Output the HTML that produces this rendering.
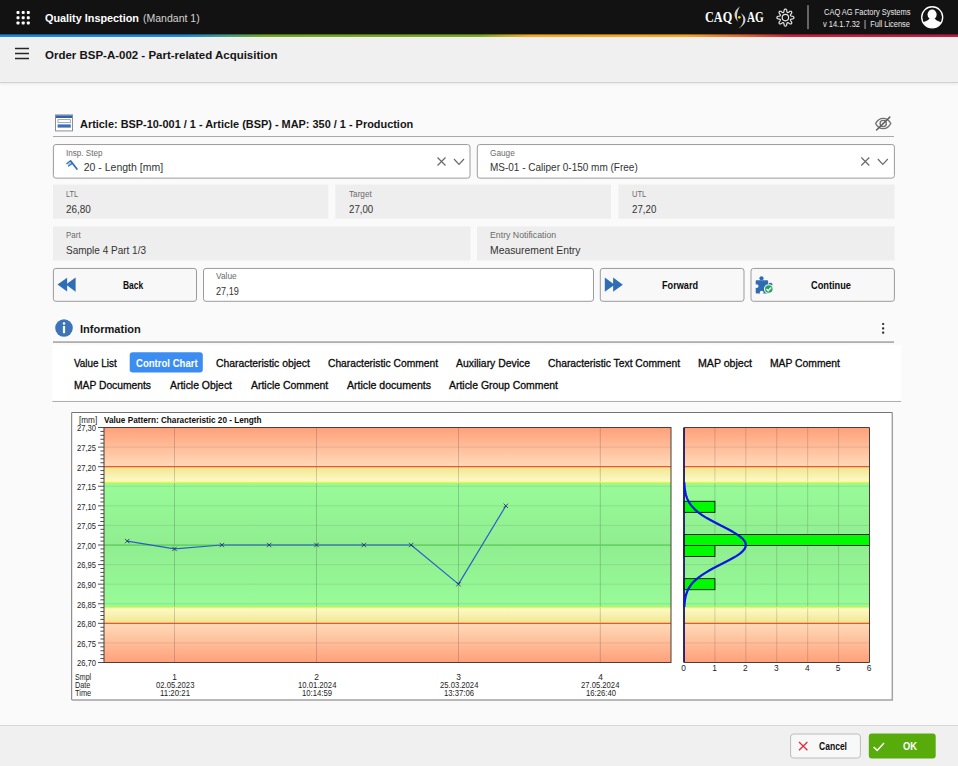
<!DOCTYPE html>
<html><head><meta charset="utf-8"><title>Quality Inspection</title>
<style>
*{box-sizing:border-box;margin:0;padding:0}
html,body{width:958px;height:766px;overflow:hidden}
body{position:relative;background:#fafafa;font-family:"Liberation Sans",sans-serif;}
.a{position:absolute}
.t{position:absolute;white-space:pre;line-height:1;transform-origin:0 50%;font-family:"Liberation Sans",sans-serif}
#topbar{left:0;top:0;width:958px;height:35px;background:#121212}
#header{left:0;top:37px;width:958px;height:46px;background:#f0f0f0;border-bottom:1px solid #d0d0d0;box-shadow:0 1px 3px rgba(0,0,0,.08)}
#footer{left:0;top:725px;width:958px;height:41px;background:#f0f0f0;border-top:1px solid #d6d6d6}
svg{position:absolute;left:0;top:0;overflow:visible}
</style></head>
<body>
<div id="topbar" class="a"></div><div id="header" class="a"></div>
<div id="footer" class="a"></div>
<svg width="958" height="766" viewBox="0 0 958 766">
<defs><linearGradient id="rb" gradientUnits="userSpaceOnUse" x1="0" y1="0" x2="958" y2="0"><stop offset="0.0000" stop-color="#1a85d9"/><stop offset="0.1931" stop-color="#1a85d9"/><stop offset="0.2349" stop-color="#3f9a86"/><stop offset="0.2766" stop-color="#6fa720"/><stop offset="0.4990" stop-color="#73a91e"/><stop offset="0.5271" stop-color="#b9aa21"/><stop offset="0.5532" stop-color="#f6a821"/><stop offset="0.7182" stop-color="#f5a322"/><stop offset="0.7724" stop-color="#e5652d"/><stop offset="0.8246" stop-color="#c8203c"/><stop offset="1.0000" stop-color="#b71a3d"/></linearGradient></defs>
<rect x="0" y="34.4" width="958" height="2.55" fill="url(#rb)"/>
<rect x="53.00" y="136.05" width="841.00" height="0.85" rx="0" fill="#9a9a9a"/>
<rect x="53.40" y="144.55" width="416.60" height="33.60" rx="2.5" fill="#fff" stroke="#9b9b9b" stroke-width="1"/>
<rect x="477.30" y="144.55" width="417.10" height="33.60" rx="2.5" fill="#fff" stroke="#9b9b9b" stroke-width="1"/>
<rect x="53.00" y="184.60" width="275.30" height="34.10" rx="0" fill="#eeeeee"/>
<rect x="335.30" y="184.60" width="275.70" height="34.10" rx="0" fill="#eeeeee"/>
<rect x="618.40" y="184.60" width="276.20" height="34.10" rx="0" fill="#eeeeee"/>
<rect x="53.00" y="226.40" width="417.50" height="34.10" rx="0" fill="#eeeeee"/>
<rect x="477.00" y="226.40" width="417.60" height="34.10" rx="0" fill="#eeeeee"/>
<rect x="53.40" y="268.45" width="143.10" height="32.85" rx="2.5" fill="#f8f8f8" stroke="#9b9b9b" stroke-width="1"/>
<rect x="203.50" y="268.45" width="390.00" height="32.85" rx="2.5" fill="#fff" stroke="#9b9b9b" stroke-width="1"/>
<rect x="600.30" y="268.45" width="143.70" height="32.85" rx="2.5" fill="#f8f8f8" stroke="#9b9b9b" stroke-width="1"/>
<rect x="751.00" y="268.45" width="143.40" height="32.85" rx="2.5" fill="#f8f8f8" stroke="#9b9b9b" stroke-width="1"/>
<rect x="53.00" y="341.30" width="841.00" height="1.60" rx="0" fill="#a6a6a6"/>
<rect x="52.40" y="344.80" width="848.80" height="56.40" rx="0" fill="#ffffff"/>
<rect x="52.40" y="400.95" width="848.80" height="1.00" rx="0" fill="#ababab"/>
<rect x="129.70" y="352.20" width="73.10" height="20.40" rx="3" fill="#3c8df2"/>
<rect x="71.70" y="412.40" width="820.50" height="287.30" rx="0" fill="#ffffff"/>
<path d="M71.7 699.9 V412.5 H892.4" fill="none" stroke="#747474" stroke-width="1"/>
<path d="M892.3 412.5 V699.9 H71.7" fill="none" stroke="#a3a3a3" stroke-width="1.5"/>
<rect x="790.60" y="734.00" width="69.80" height="24.00" rx="3" fill="#f8f8f8" stroke="#bcbcbc" stroke-width="1"/>
<rect x="868.80" y="733.60" width="66.90" height="24.80" rx="3" fill="#57ab0b"/>
<defs>
<linearGradient id="gr1" x1="0" y1="0" x2="0" y2="1"><stop offset="0" stop-color="#ffa07a"/><stop offset="1" stop-color="#ffdab9"/></linearGradient>
<linearGradient id="gr2" x1="0" y1="0" x2="0" y2="1"><stop offset="0" stop-color="#ffdab9"/><stop offset="1" stop-color="#ffa07a"/></linearGradient>
<linearGradient id="gy1" x1="0" y1="0" x2="0" y2="1"><stop offset="0" stop-color="#f0e68c"/><stop offset="1" stop-color="#fffacd"/></linearGradient>
<linearGradient id="gy2" x1="0" y1="0" x2="0" y2="1"><stop offset="0" stop-color="#fffacd"/><stop offset="1" stop-color="#f0e68c"/></linearGradient>
<linearGradient id="gg" x1="0" y1="0" x2="0" y2="1"><stop offset="0" stop-color="#98fb98"/><stop offset="0.5" stop-color="#90ee90"/><stop offset="1" stop-color="#98fb98"/></linearGradient>
</defs>
<rect x="104.00" y="427.50" width="567.00" height="39.17" fill="url(#gr1)"/>
<rect x="104.00" y="466.67" width="567.00" height="15.67" fill="url(#gy1)"/>
<rect x="104.00" y="482.33" width="567.00" height="125.33" fill="url(#gg)"/>
<rect x="104.00" y="607.67" width="567.00" height="15.67" fill="url(#gy2)"/>
<rect x="104.00" y="623.33" width="567.00" height="39.17" fill="url(#gr2)"/>
<line x1="104.00" x2="671.00" y1="447.08" y2="447.08" stroke="rgba(70,60,60,.135)" stroke-width="0.9"/>
<line x1="104.00" x2="671.00" y1="466.67" y2="466.67" stroke="rgba(70,60,60,.135)" stroke-width="0.9"/>
<line x1="104.00" x2="671.00" y1="486.25" y2="486.25" stroke="rgba(70,60,60,.135)" stroke-width="0.9"/>
<line x1="104.00" x2="671.00" y1="505.83" y2="505.83" stroke="rgba(70,60,60,.135)" stroke-width="0.9"/>
<line x1="104.00" x2="671.00" y1="525.42" y2="525.42" stroke="rgba(70,60,60,.135)" stroke-width="0.9"/>
<line x1="104.00" x2="671.00" y1="545.00" y2="545.00" stroke="rgba(70,60,60,.135)" stroke-width="0.9"/>
<line x1="104.00" x2="671.00" y1="564.58" y2="564.58" stroke="rgba(70,60,60,.135)" stroke-width="0.9"/>
<line x1="104.00" x2="671.00" y1="584.17" y2="584.17" stroke="rgba(70,60,60,.135)" stroke-width="0.9"/>
<line x1="104.00" x2="671.00" y1="603.75" y2="603.75" stroke="rgba(70,60,60,.135)" stroke-width="0.9"/>
<line x1="104.00" x2="671.00" y1="623.33" y2="623.33" stroke="rgba(70,60,60,.135)" stroke-width="0.9"/>
<line x1="104.00" x2="671.00" y1="642.92" y2="642.92" stroke="rgba(70,60,60,.135)" stroke-width="0.9"/>
<rect x="684.00" y="427.50" width="185.50" height="39.17" fill="url(#gr1)"/>
<rect x="684.00" y="466.67" width="185.50" height="15.67" fill="url(#gy1)"/>
<rect x="684.00" y="482.33" width="185.50" height="125.33" fill="url(#gg)"/>
<rect x="684.00" y="607.67" width="185.50" height="15.67" fill="url(#gy2)"/>
<rect x="684.00" y="623.33" width="185.50" height="39.17" fill="url(#gr2)"/>
<line x1="684.00" x2="869.50" y1="447.08" y2="447.08" stroke="rgba(70,60,60,.135)" stroke-width="0.9"/>
<line x1="684.00" x2="869.50" y1="466.67" y2="466.67" stroke="rgba(70,60,60,.135)" stroke-width="0.9"/>
<line x1="684.00" x2="869.50" y1="486.25" y2="486.25" stroke="rgba(70,60,60,.135)" stroke-width="0.9"/>
<line x1="684.00" x2="869.50" y1="505.83" y2="505.83" stroke="rgba(70,60,60,.135)" stroke-width="0.9"/>
<line x1="684.00" x2="869.50" y1="525.42" y2="525.42" stroke="rgba(70,60,60,.135)" stroke-width="0.9"/>
<line x1="684.00" x2="869.50" y1="545.00" y2="545.00" stroke="rgba(70,60,60,.135)" stroke-width="0.9"/>
<line x1="684.00" x2="869.50" y1="564.58" y2="564.58" stroke="rgba(70,60,60,.135)" stroke-width="0.9"/>
<line x1="684.00" x2="869.50" y1="584.17" y2="584.17" stroke="rgba(70,60,60,.135)" stroke-width="0.9"/>
<line x1="684.00" x2="869.50" y1="603.75" y2="603.75" stroke="rgba(70,60,60,.135)" stroke-width="0.9"/>
<line x1="684.00" x2="869.50" y1="623.33" y2="623.33" stroke="rgba(70,60,60,.135)" stroke-width="0.9"/>
<line x1="684.00" x2="869.50" y1="642.92" y2="642.92" stroke="rgba(70,60,60,.135)" stroke-width="0.9"/>
<line x1="174.50" x2="174.50" y1="427.50" y2="662.50" stroke="rgba(60,55,55,.25)" stroke-width="0.9"/>
<line x1="316.50" x2="316.50" y1="427.50" y2="662.50" stroke="rgba(60,55,55,.25)" stroke-width="0.9"/>
<line x1="458.50" x2="458.50" y1="427.50" y2="662.50" stroke="rgba(60,55,55,.25)" stroke-width="0.9"/>
<line x1="600.30" x2="600.30" y1="427.50" y2="662.50" stroke="rgba(60,55,55,.25)" stroke-width="0.9"/>
<line x1="714.92" x2="714.92" y1="427.50" y2="662.50" stroke="rgba(60,55,55,.21)" stroke-width="0.9"/>
<line x1="745.83" x2="745.83" y1="427.50" y2="662.50" stroke="rgba(60,55,55,.21)" stroke-width="0.9"/>
<line x1="776.75" x2="776.75" y1="427.50" y2="662.50" stroke="rgba(60,55,55,.21)" stroke-width="0.9"/>
<line x1="807.67" x2="807.67" y1="427.50" y2="662.50" stroke="rgba(60,55,55,.21)" stroke-width="0.9"/>
<line x1="838.58" x2="838.58" y1="427.50" y2="662.50" stroke="rgba(60,55,55,.21)" stroke-width="0.9"/>
<line x1="104.00" x2="671.00" y1="466.67" y2="466.67" stroke="#ec5437" stroke-width="1.3"/>
<line x1="104.00" x2="671.00" y1="623.33" y2="623.33" stroke="#ec5437" stroke-width="1.3"/>
<line x1="104.00" x2="671.00" y1="482.33" y2="482.33" stroke="#f4f42a" stroke-width="1.3"/>
<line x1="104.00" x2="671.00" y1="607.67" y2="607.67" stroke="#f3f14a" stroke-width="1.3"/>
<line x1="684.00" x2="869.50" y1="466.67" y2="466.67" stroke="#ec5437" stroke-width="1.3"/>
<line x1="684.00" x2="869.50" y1="623.33" y2="623.33" stroke="#ec5437" stroke-width="1.3"/>
<line x1="684.00" x2="869.50" y1="482.33" y2="482.33" stroke="#f4f42a" stroke-width="1.3"/>
<line x1="684.00" x2="869.50" y1="607.67" y2="607.67" stroke="#f3f14a" stroke-width="1.3"/>
<line x1="104.00" x2="671.00" y1="545.00" y2="545.00" stroke="#58cf58" stroke-width="1.25"/>
<rect x="684.00" y="501.30" width="30.92" height="11.05" fill="#00fb00" stroke="#101010" stroke-width="0.9"/>
<rect x="684.00" y="534.45" width="185.50" height="11.05" fill="#00fb00" stroke="#101010" stroke-width="0.9"/>
<rect x="684.00" y="545.50" width="30.92" height="11.05" fill="#00fb00" stroke="#101010" stroke-width="0.9"/>
<rect x="684.00" y="578.65" width="30.92" height="11.05" fill="#00fb00" stroke="#101010" stroke-width="0.9"/>
<line x1="684.00" x2="684.00" y1="427.50" y2="662.50" stroke="#14146e" stroke-width="1.8"/>
<path d="M684.28 482.33 L684.37 483.83 L684.47 485.33 L684.60 486.83 L684.76 488.33 L684.95 489.83 L685.19 491.33 L685.48 492.83 L685.83 494.33 L686.25 495.83 L686.75 497.33 L687.33 498.83 L688.01 500.33 L688.81 501.83 L689.73 503.33 L690.77 504.83 L691.97 506.33 L693.31 507.83 L694.81 509.33 L696.48 510.83 L698.32 512.33 L700.33 513.83 L702.51 515.33 L704.84 516.83 L707.33 518.33 L709.96 519.83 L712.70 521.33 L715.53 522.83 L718.43 524.33 L721.37 525.83 L724.31 527.33 L727.22 528.83 L730.04 530.33 L732.76 531.83 L735.31 533.33 L737.67 534.83 L739.78 536.33 L741.63 537.83 L743.17 539.33 L744.38 540.83 L745.23 542.33 L745.72 543.83 L745.82 545.33 L745.55 546.83 L744.90 548.33 L743.88 549.83 L742.53 551.33 L740.85 552.83 L738.87 554.33 L736.65 555.83 L734.20 557.33 L731.57 558.83 L728.80 560.33 L725.93 561.83 L723.01 563.33 L720.06 564.83 L717.14 566.33 L714.26 567.83 L711.46 569.33 L708.77 570.83 L706.21 572.33 L703.79 573.83 L701.52 575.33 L699.42 576.83 L697.49 578.33 L695.72 579.83 L694.13 581.33 L692.69 582.83 L691.42 584.33 L690.29 585.83 L689.30 587.33 L688.44 588.83 L687.70 590.33 L687.06 591.83 L686.52 593.33 L686.06 594.83 L685.67 596.33 L685.35 597.83 L685.08 599.33 L684.86 600.83 L684.68 602.33 L684.54 603.83 L684.42 605.33 L684.33 606.83" fill="none" stroke="#0a14e6" stroke-width="2.2" stroke-linejoin="round"/>
<rect x="104.00" y="427.50" width="567.00" height="235.00" fill="none" stroke="#4a3f38" stroke-width="1"/>
<path d="M684.00 427.50 H869.50 V662.50 H684.00" fill="none" stroke="#4a3f38" stroke-width="1"/>
<line x1="98.00" x2="104.00" y1="427.50" y2="427.50" stroke="#3a3a3a" stroke-width="0.9"/>
<line x1="100.40" x2="104.00" y1="431.42" y2="431.42" stroke="#3a3a3a" stroke-width="0.9"/>
<line x1="100.40" x2="104.00" y1="435.33" y2="435.33" stroke="#3a3a3a" stroke-width="0.9"/>
<line x1="100.40" x2="104.00" y1="439.25" y2="439.25" stroke="#3a3a3a" stroke-width="0.9"/>
<line x1="100.40" x2="104.00" y1="443.17" y2="443.17" stroke="#3a3a3a" stroke-width="0.9"/>
<line x1="98.00" x2="104.00" y1="447.08" y2="447.08" stroke="#3a3a3a" stroke-width="0.9"/>
<line x1="100.40" x2="104.00" y1="451.00" y2="451.00" stroke="#3a3a3a" stroke-width="0.9"/>
<line x1="100.40" x2="104.00" y1="454.92" y2="454.92" stroke="#3a3a3a" stroke-width="0.9"/>
<line x1="100.40" x2="104.00" y1="458.83" y2="458.83" stroke="#3a3a3a" stroke-width="0.9"/>
<line x1="100.40" x2="104.00" y1="462.75" y2="462.75" stroke="#3a3a3a" stroke-width="0.9"/>
<line x1="98.00" x2="104.00" y1="466.67" y2="466.67" stroke="#3a3a3a" stroke-width="0.9"/>
<line x1="100.40" x2="104.00" y1="470.58" y2="470.58" stroke="#3a3a3a" stroke-width="0.9"/>
<line x1="100.40" x2="104.00" y1="474.50" y2="474.50" stroke="#3a3a3a" stroke-width="0.9"/>
<line x1="100.40" x2="104.00" y1="478.42" y2="478.42" stroke="#3a3a3a" stroke-width="0.9"/>
<line x1="100.40" x2="104.00" y1="482.33" y2="482.33" stroke="#3a3a3a" stroke-width="0.9"/>
<line x1="98.00" x2="104.00" y1="486.25" y2="486.25" stroke="#3a3a3a" stroke-width="0.9"/>
<line x1="100.40" x2="104.00" y1="490.17" y2="490.17" stroke="#3a3a3a" stroke-width="0.9"/>
<line x1="100.40" x2="104.00" y1="494.08" y2="494.08" stroke="#3a3a3a" stroke-width="0.9"/>
<line x1="100.40" x2="104.00" y1="498.00" y2="498.00" stroke="#3a3a3a" stroke-width="0.9"/>
<line x1="100.40" x2="104.00" y1="501.92" y2="501.92" stroke="#3a3a3a" stroke-width="0.9"/>
<line x1="98.00" x2="104.00" y1="505.83" y2="505.83" stroke="#3a3a3a" stroke-width="0.9"/>
<line x1="100.40" x2="104.00" y1="509.75" y2="509.75" stroke="#3a3a3a" stroke-width="0.9"/>
<line x1="100.40" x2="104.00" y1="513.67" y2="513.67" stroke="#3a3a3a" stroke-width="0.9"/>
<line x1="100.40" x2="104.00" y1="517.58" y2="517.58" stroke="#3a3a3a" stroke-width="0.9"/>
<line x1="100.40" x2="104.00" y1="521.50" y2="521.50" stroke="#3a3a3a" stroke-width="0.9"/>
<line x1="98.00" x2="104.00" y1="525.42" y2="525.42" stroke="#3a3a3a" stroke-width="0.9"/>
<line x1="100.40" x2="104.00" y1="529.33" y2="529.33" stroke="#3a3a3a" stroke-width="0.9"/>
<line x1="100.40" x2="104.00" y1="533.25" y2="533.25" stroke="#3a3a3a" stroke-width="0.9"/>
<line x1="100.40" x2="104.00" y1="537.17" y2="537.17" stroke="#3a3a3a" stroke-width="0.9"/>
<line x1="100.40" x2="104.00" y1="541.08" y2="541.08" stroke="#3a3a3a" stroke-width="0.9"/>
<line x1="98.00" x2="104.00" y1="545.00" y2="545.00" stroke="#3a3a3a" stroke-width="0.9"/>
<line x1="100.40" x2="104.00" y1="548.92" y2="548.92" stroke="#3a3a3a" stroke-width="0.9"/>
<line x1="100.40" x2="104.00" y1="552.83" y2="552.83" stroke="#3a3a3a" stroke-width="0.9"/>
<line x1="100.40" x2="104.00" y1="556.75" y2="556.75" stroke="#3a3a3a" stroke-width="0.9"/>
<line x1="100.40" x2="104.00" y1="560.67" y2="560.67" stroke="#3a3a3a" stroke-width="0.9"/>
<line x1="98.00" x2="104.00" y1="564.58" y2="564.58" stroke="#3a3a3a" stroke-width="0.9"/>
<line x1="100.40" x2="104.00" y1="568.50" y2="568.50" stroke="#3a3a3a" stroke-width="0.9"/>
<line x1="100.40" x2="104.00" y1="572.42" y2="572.42" stroke="#3a3a3a" stroke-width="0.9"/>
<line x1="100.40" x2="104.00" y1="576.33" y2="576.33" stroke="#3a3a3a" stroke-width="0.9"/>
<line x1="100.40" x2="104.00" y1="580.25" y2="580.25" stroke="#3a3a3a" stroke-width="0.9"/>
<line x1="98.00" x2="104.00" y1="584.17" y2="584.17" stroke="#3a3a3a" stroke-width="0.9"/>
<line x1="100.40" x2="104.00" y1="588.08" y2="588.08" stroke="#3a3a3a" stroke-width="0.9"/>
<line x1="100.40" x2="104.00" y1="592.00" y2="592.00" stroke="#3a3a3a" stroke-width="0.9"/>
<line x1="100.40" x2="104.00" y1="595.92" y2="595.92" stroke="#3a3a3a" stroke-width="0.9"/>
<line x1="100.40" x2="104.00" y1="599.83" y2="599.83" stroke="#3a3a3a" stroke-width="0.9"/>
<line x1="98.00" x2="104.00" y1="603.75" y2="603.75" stroke="#3a3a3a" stroke-width="0.9"/>
<line x1="100.40" x2="104.00" y1="607.67" y2="607.67" stroke="#3a3a3a" stroke-width="0.9"/>
<line x1="100.40" x2="104.00" y1="611.58" y2="611.58" stroke="#3a3a3a" stroke-width="0.9"/>
<line x1="100.40" x2="104.00" y1="615.50" y2="615.50" stroke="#3a3a3a" stroke-width="0.9"/>
<line x1="100.40" x2="104.00" y1="619.42" y2="619.42" stroke="#3a3a3a" stroke-width="0.9"/>
<line x1="98.00" x2="104.00" y1="623.33" y2="623.33" stroke="#3a3a3a" stroke-width="0.9"/>
<line x1="100.40" x2="104.00" y1="627.25" y2="627.25" stroke="#3a3a3a" stroke-width="0.9"/>
<line x1="100.40" x2="104.00" y1="631.17" y2="631.17" stroke="#3a3a3a" stroke-width="0.9"/>
<line x1="100.40" x2="104.00" y1="635.08" y2="635.08" stroke="#3a3a3a" stroke-width="0.9"/>
<line x1="100.40" x2="104.00" y1="639.00" y2="639.00" stroke="#3a3a3a" stroke-width="0.9"/>
<line x1="98.00" x2="104.00" y1="642.92" y2="642.92" stroke="#3a3a3a" stroke-width="0.9"/>
<line x1="100.40" x2="104.00" y1="646.83" y2="646.83" stroke="#3a3a3a" stroke-width="0.9"/>
<line x1="100.40" x2="104.00" y1="650.75" y2="650.75" stroke="#3a3a3a" stroke-width="0.9"/>
<line x1="100.40" x2="104.00" y1="654.67" y2="654.67" stroke="#3a3a3a" stroke-width="0.9"/>
<line x1="100.40" x2="104.00" y1="658.58" y2="658.58" stroke="#3a3a3a" stroke-width="0.9"/>
<line x1="98.00" x2="104.00" y1="662.50" y2="662.50" stroke="#3a3a3a" stroke-width="0.9"/>
<path d="M127.17 541.08 L174.50 548.92 L221.83 545.00 L269.17 545.00 L316.50 545.00 L363.83 545.00 L411.17 545.00 L458.50 584.17 L505.83 505.83" fill="none" stroke="#2a5ccb" stroke-width="1.15" stroke-linejoin="round"/>
<path d="M124.97 538.88 l4.4 4.4 m0 -4.4 l-4.4 4.4" stroke="#1b2560" stroke-width="0.8" fill="none"/>
<path d="M172.30 546.72 l4.4 4.4 m0 -4.4 l-4.4 4.4" stroke="#1b2560" stroke-width="0.8" fill="none"/>
<path d="M219.63 542.80 l4.4 4.4 m0 -4.4 l-4.4 4.4" stroke="#1b2560" stroke-width="0.8" fill="none"/>
<path d="M266.97 542.80 l4.4 4.4 m0 -4.4 l-4.4 4.4" stroke="#1b2560" stroke-width="0.8" fill="none"/>
<path d="M314.30 542.80 l4.4 4.4 m0 -4.4 l-4.4 4.4" stroke="#1b2560" stroke-width="0.8" fill="none"/>
<path d="M361.63 542.80 l4.4 4.4 m0 -4.4 l-4.4 4.4" stroke="#1b2560" stroke-width="0.8" fill="none"/>
<path d="M408.97 542.80 l4.4 4.4 m0 -4.4 l-4.4 4.4" stroke="#1b2560" stroke-width="0.8" fill="none"/>
<path d="M456.30 581.97 l4.4 4.4 m0 -4.4 l-4.4 4.4" stroke="#1b2560" stroke-width="0.8" fill="none"/>
<path d="M503.63 503.63 l4.4 4.4 m0 -4.4 l-4.4 4.4" stroke="#1b2560" stroke-width="0.8" fill="none"/>
<rect x="16.50" y="11.00" width="3" height="3" rx="0.9" fill="#fff"/>
<rect x="21.70" y="11.00" width="3" height="3" rx="0.9" fill="#fff"/>
<rect x="26.80" y="11.00" width="3" height="3" rx="0.9" fill="#fff"/>
<rect x="16.50" y="16.20" width="3" height="3" rx="0.9" fill="#fff"/>
<rect x="21.70" y="16.20" width="3" height="3" rx="0.9" fill="#fff"/>
<rect x="26.80" y="16.20" width="3" height="3" rx="0.9" fill="#fff"/>
<rect x="16.50" y="21.40" width="3" height="3" rx="0.9" fill="#fff"/>
<rect x="21.70" y="21.40" width="3" height="3" rx="0.9" fill="#fff"/>
<rect x="26.80" y="21.40" width="3" height="3" rx="0.9" fill="#fff"/>
<rect x="15" y="47.75" width="14" height="1.5" fill="#262626"/>
<rect x="15" y="52.75" width="14" height="1.5" fill="#262626"/>
<rect x="15" y="57.75" width="14" height="1.5" fill="#262626"/>
<path d="M739.9 6.5 C735.4 9.6 733.5 13.6 735.1 17.4 C735.9 19.4 737 20.8 738.3 21.9 C737.2 19.9 736.9 18 737 16 C737.1 12.4 738.1 9.4 739.9 6.5 Z" fill="#cdcdcd"/>
<path d="M740.7 13.3 C742.5 15.4 743.5 17.6 743.3 20.4 C743.1 23.2 741.4 26 738.5 28.5 C742.6 26.5 745.3 23.4 745.5 20 C745.6 17.2 743.6 14.8 740.7 13.3 Z" fill="#cdcdcd"/>
<circle cx="739.3" cy="17.3" r="1.35" fill="#f4d41a"/>
<g fill="none" stroke="#e4e4e4" stroke-width="1.2" stroke-linejoin="round"><path d="M785.40 9.05 L785.73 9.11 L786.06 9.28 L786.35 9.56 L786.61 9.97 L786.77 10.73 L786.87 11.50 L787.00 11.92 L787.15 12.23 L787.30 12.44 L787.49 12.56 L787.70 12.61 L787.96 12.57 L788.28 12.45 L788.68 12.25 L789.29 11.78 L789.94 11.35 L790.41 11.24 L790.82 11.25 L791.17 11.36 L791.45 11.55 L791.64 11.83 L791.75 12.18 L791.76 12.59 L791.65 13.06 L791.22 13.71 L790.75 14.32 L790.55 14.72 L790.43 15.04 L790.39 15.30 L790.44 15.51 L790.56 15.70 L790.77 15.85 L791.08 16.00 L791.50 16.13 L792.27 16.23 L793.03 16.39 L793.44 16.65 L793.72 16.94 L793.89 17.27 L793.95 17.60 L793.89 17.93 L793.72 18.26 L793.44 18.55 L793.03 18.81 L792.27 18.97 L791.50 19.07 L791.08 19.20 L790.77 19.35 L790.56 19.50 L790.44 19.69 L790.39 19.90 L790.43 20.16 L790.55 20.48 L790.75 20.88 L791.22 21.49 L791.65 22.14 L791.76 22.61 L791.75 23.02 L791.64 23.37 L791.45 23.65 L791.17 23.84 L790.82 23.95 L790.41 23.96 L789.94 23.85 L789.29 23.42 L788.68 22.95 L788.28 22.75 L787.96 22.63 L787.70 22.59 L787.49 22.64 L787.30 22.76 L787.15 22.97 L787.00 23.28 L786.87 23.70 L786.77 24.47 L786.61 25.23 L786.35 25.64 L786.06 25.92 L785.73 26.09 L785.40 26.15 L785.07 26.09 L784.74 25.92 L784.45 25.64 L784.19 25.23 L784.03 24.47 L783.93 23.70 L783.80 23.28 L783.65 22.97 L783.50 22.76 L783.31 22.64 L783.10 22.59 L782.84 22.63 L782.52 22.75 L782.12 22.95 L781.51 23.42 L780.86 23.85 L780.39 23.96 L779.98 23.95 L779.63 23.84 L779.35 23.65 L779.16 23.37 L779.05 23.02 L779.04 22.61 L779.15 22.14 L779.58 21.49 L780.05 20.88 L780.25 20.48 L780.37 20.16 L780.41 19.90 L780.36 19.69 L780.24 19.50 L780.03 19.35 L779.72 19.20 L779.30 19.07 L778.53 18.97 L777.77 18.81 L777.36 18.55 L777.08 18.26 L776.91 17.93 L776.85 17.60 L776.91 17.27 L777.08 16.94 L777.36 16.65 L777.77 16.39 L778.53 16.23 L779.30 16.13 L779.72 16.00 L780.03 15.85 L780.24 15.70 L780.36 15.51 L780.41 15.30 L780.37 15.04 L780.25 14.72 L780.05 14.32 L779.58 13.71 L779.15 13.06 L779.04 12.59 L779.05 12.18 L779.16 11.83 L779.35 11.55 L779.63 11.36 L779.98 11.25 L780.39 11.24 L780.86 11.35 L781.51 11.78 L782.12 12.25 L782.52 12.45 L782.84 12.57 L783.10 12.61 L783.31 12.56 L783.50 12.44 L783.65 12.23 L783.80 11.92 L783.93 11.50 L784.03 10.73 L784.19 9.97 L784.45 9.56 L784.74 9.28 L785.07 9.11 Z"/><circle cx="785.40" cy="17.60" r="3.2"/></g>
<rect x="807.1" y="5.2" width="1.8" height="24" fill="#6f6f6f"/>
<clipPath id="avc"><circle cx="932.2" cy="17.3" r="10.2"/></clipPath>
<circle cx="932.2" cy="17.3" r="10.5" fill="#121212" stroke="#fff" stroke-width="1.35"/>
<g clip-path="url(#avc)" fill="#fff"><ellipse cx="932.1" cy="14.5" rx="4.55" ry="5.1"/><path d="M921 23.4 L924.3 21.8 Q928.7 20.6 929.2 18.6 L935 18.6 Q935.5 20.6 939.9 21.8 L943.4 23.4 L944 31 L920 31 Z"/></g>
<rect x="55.5" y="114.9" width="17" height="16" fill="#fff" stroke="#8a8f96" stroke-width="1"/>
<rect x="56" y="115.4" width="16" height="2.6" fill="#2f63a8"/>
<rect x="58" y="119.6" width="12.4" height="3" fill="#fff" stroke="#9aa0a8" stroke-width="0.9"/>
<rect x="57.6" y="124.4" width="13.2" height="3.2" fill="#3a70b4"/>
<g fill="none" stroke="#707070" stroke-width="1.35" stroke-linecap="round"><path d="M875.6 123.5 C879.2 116.6 887.2 116.6 890.8 123.5 C887.2 130.4 879.2 130.4 875.6 123.5 Z"/><circle cx="883.2" cy="123.5" r="3.1"/><path d="M889.8 117.1 L876.6 130" stroke="#5e5e5e" stroke-width="1.5"/></g>
<polygon points="67.2,163.9 70.6,161.3 72.3,163.7 68.9,166.1" fill="#a6d4f4"/>
<g stroke="#2f6cb8" stroke-linecap="round" fill="none"><path d="M70.9 161.2 L76.9 169.1" stroke-width="1.7"/><path d="M70.5 160.7 L66.7 163.7" stroke-width="1.15"/><path d="M72.2 163.6 L68.5 166.1" stroke-width="1.15"/></g>
<g stroke="#686868" stroke-width="1.15" fill="none"><path d="M437.50 157.5 l8 8 m0 -8 l-8 8"/><path d="M454.00 159 l5 5.4 l5 -5.4"/></g>
<g stroke="#686868" stroke-width="1.15" fill="none"><path d="M861.30 157.5 l8 8 m0 -8 l-8 8"/><path d="M877.80 159 l5 5.4 l5 -5.4"/></g>
<g fill="#2f6db4"><polygon points="57.5,284.6 67.1,277.7 67.1,291.6"/><polygon points="65.9,284.6 75.6,277.5 75.6,291.7"/></g>
<g fill="#2f6db4"><polygon points="604.8,277.5 604.8,291.8 614.6,284.7"/><polygon points="613.1,277.6 613.1,291.8 622.8,284.7"/></g>
<g fill="#2e6bb3"><rect x="755.7" y="280.2" width="12.4" height="13.2" rx="0.8"/><circle cx="761.5" cy="278.3" r="2.1"/><circle cx="770.4" cy="284.8" r="2.1"/></g>
<circle cx="756.6" cy="286.1" r="1.9" fill="#f8f8f8"/><circle cx="761.7" cy="292.6" r="1.9" fill="#f8f8f8"/>
<circle cx="768.8" cy="289" r="4.3" fill="#25a35a" stroke="#f4f8f4" stroke-width="1.1"/>
<path d="M766.5 289 l1.7 1.8 l3 -3.3" fill="none" stroke="#fff" stroke-width="1.3"/>
<circle cx="64" cy="328" r="8.8" fill="#3c74b7"/><circle cx="64" cy="323.6" r="1.25" fill="#fff"/><rect x="62.9" y="326" width="2.2" height="7.2" fill="#fff"/>
<rect x="882.05" y="322.90" width="2.2" height="2.2" rx="0.8" fill="#2e2e2e"/>
<rect x="882.05" y="327.30" width="2.2" height="2.2" rx="0.8" fill="#2e2e2e"/>
<rect x="882.05" y="331.60" width="2.2" height="2.2" rx="0.8" fill="#2e2e2e"/>
<path d="M799 742 l8.4 8.2 m0 -8.2 l-8.4 8.2" stroke="#d9303c" stroke-width="1.3" fill="none"/>
<path d="M873.6 747 l3.6 3.4 l6.8 -7.4" stroke="#fff" stroke-width="1.5" fill="none"/>
</svg>
<span class="t" style="left:45.00px;top:13px;font-size:11.5px;color:#ffffff;transform:scaleX(0.9429);font-weight:bold;">Quality Inspection</span>
<span class="t" style="left:143.00px;top:13px;font-size:11.5px;color:#d4d4d4;transform:scaleX(0.9143);">(Mandant 1)</span>
<span class="t" style="left:705.00px;top:10px;font-size:15px;color:#ffffff;transform:scaleX(0.8157);font-weight:bold;font-family:'Liberation Serif',serif;">CAQ</span>
<span class="t" style="left:746.70px;top:10px;font-size:15px;color:#ffffff;transform:scaleX(0.7467);font-weight:bold;font-family:'Liberation Serif',serif;">AG</span>
<span class="t" style="left:823.60px;top:8px;font-size:8.5px;color:#ececec;transform:scaleX(0.8794);">CAQ AG Factory Systems</span>
<span class="t" style="left:823.00px;top:20px;font-size:8.5px;color:#ececec;transform:scaleX(0.8781);">v 14.1.7.32  |  Full License</span>
<span class="t" style="left:45.00px;top:50px;font-size:11.25px;color:#151515;transform:scaleX(1.0208);font-weight:bold;">Order BSP-A-002 - Part-related Acquisition</span>
<span class="t" style="left:80.25px;top:119px;font-size:10.75px;color:#151515;transform:scaleX(1.0155);font-weight:bold;">Article: BSP-10-001 / 1 - Article (BSP) - MAP: 350 / 1 - Production</span>
<span class="t" style="left:80.25px;top:324px;font-size:10.75px;color:#151515;transform:scaleX(1.0275);font-weight:bold;">Information</span>
<span class="t" style="left:65.60px;top:149px;font-size:8.5px;color:#6a6a6a;transform:scaleX(0.9509);">Insp. Step</span>
<span class="t" style="left:83.75px;top:162px;font-size:10.5px;color:#333333;">20 - Length [mm]</span>
<span class="t" style="left:490.00px;top:149px;font-size:8.5px;color:#6a6a6a;transform:scaleX(0.9694);">Gauge</span>
<span class="t" style="left:490.00px;top:162px;font-size:10.5px;color:#333333;transform:scaleX(0.9517);">MS-01 - Caliper 0-150 mm (Free)</span>
<span class="t" style="left:65.60px;top:190px;font-size:8.5px;color:#6a6a6a;transform:scaleX(0.8624);">LTL</span>
<span class="t" style="left:65.60px;top:204px;font-size:10.5px;color:#333333;transform:scaleX(0.9474);">26,80</span>
<span class="t" style="left:348.75px;top:190px;font-size:8.5px;color:#6a6a6a;transform:scaleX(0.9630);">Target</span>
<span class="t" style="left:348.75px;top:204px;font-size:10.5px;color:#333333;transform:scaleX(0.9227);">27,00</span>
<span class="t" style="left:631.70px;top:190px;font-size:8.5px;color:#6a6a6a;transform:scaleX(0.8903);">UTL</span>
<span class="t" style="left:631.70px;top:204px;font-size:10.5px;color:#333333;transform:scaleX(0.9246);">27,20</span>
<span class="t" style="left:65.60px;top:231px;font-size:8.5px;color:#6a6a6a;transform:scaleX(0.9395);">Part</span>
<span class="t" style="left:65.60px;top:245px;font-size:10.5px;color:#333333;transform:scaleX(0.9518);">Sample 4 Part 1/3</span>
<span class="t" style="left:489.75px;top:231px;font-size:8.5px;color:#6a6a6a;transform:scaleX(1.0296);">Entry Notification</span>
<span class="t" style="left:489.75px;top:245px;font-size:10.5px;color:#333333;transform:scaleX(0.9872);">Measurement Entry</span>
<span class="t" style="left:216.25px;top:272px;font-size:8.5px;color:#6a6a6a;transform:scaleX(0.9782);">Value</span>
<span class="t" style="left:216.25px;top:286px;font-size:10.5px;color:#333333;transform:scaleX(0.8656);">27,19</span>
<span class="t" style="left:122.50px;top:281px;font-size:10px;color:#0c0c0c;transform:scaleX(0.8471);font-weight:bold;">Back</span>
<span class="t" style="left:661.90px;top:281px;font-size:10px;color:#0c0c0c;transform:scaleX(0.9150);font-weight:bold;">Forward</span>
<span class="t" style="left:810.80px;top:281px;font-size:10px;color:#0c0c0c;transform:scaleX(0.9232);font-weight:bold;">Continue</span>
<span class="t" style="left:74.00px;top:358px;font-size:10.5px;color:#0a0a0a;transform:scaleX(0.9417);-webkit-text-stroke:0.3px #0a0a0a;">Value List</span>
<span class="t" style="left:135.80px;top:358px;font-size:10.5px;color:#ffffff;transform:scaleX(0.9118);font-weight:bold;">Control Chart</span>
<span class="t" style="left:216.20px;top:358px;font-size:10.5px;color:#0a0a0a;transform:scaleX(0.9861);-webkit-text-stroke:0.3px #0a0a0a;">Characteristic object</span>
<span class="t" style="left:328.00px;top:358px;font-size:10.5px;color:#0a0a0a;transform:scaleX(0.9767);-webkit-text-stroke:0.3px #0a0a0a;">Characteristic Comment</span>
<span class="t" style="left:456.00px;top:358px;font-size:10.5px;color:#0a0a0a;transform:scaleX(0.9906);-webkit-text-stroke:0.3px #0a0a0a;">Auxiliary Device</span>
<span class="t" style="left:548.00px;top:358px;font-size:10.5px;color:#0a0a0a;transform:scaleX(0.9806);-webkit-text-stroke:0.3px #0a0a0a;">Characteristic Text Comment</span>
<span class="t" style="left:698.00px;top:358px;font-size:10.5px;color:#0a0a0a;transform:scaleX(1.0093);-webkit-text-stroke:0.3px #0a0a0a;">MAP object</span>
<span class="t" style="left:770.00px;top:358px;font-size:10.5px;color:#0a0a0a;transform:scaleX(0.9859);-webkit-text-stroke:0.3px #0a0a0a;">MAP Comment</span>
<span class="t" style="left:74.00px;top:380px;font-size:10.5px;color:#0a0a0a;transform:scaleX(0.9797);-webkit-text-stroke:0.3px #0a0a0a;">MAP Documents</span>
<span class="t" style="left:169.50px;top:380px;font-size:10.5px;color:#0a0a0a;transform:scaleX(0.9930);-webkit-text-stroke:0.3px #0a0a0a;">Article Object</span>
<span class="t" style="left:250.80px;top:380px;font-size:10.5px;color:#0a0a0a;transform:scaleX(0.9947);-webkit-text-stroke:0.3px #0a0a0a;">Article Comment</span>
<span class="t" style="left:347.00px;top:380px;font-size:10.5px;color:#0a0a0a;transform:scaleX(1.0066);-webkit-text-stroke:0.3px #0a0a0a;">Article documents</span>
<span class="t" style="left:449.00px;top:380px;font-size:10.5px;color:#0a0a0a;transform:scaleX(0.9936);-webkit-text-stroke:0.3px #0a0a0a;">Article Group Comment</span>
<span class="t" style="left:818.50px;top:742px;font-size:10px;color:#0c0c0c;transform:scaleX(0.8537);font-weight:bold;">Cancel</span>
<span class="t" style="left:902.60px;top:742px;font-size:10px;color:#ffffff;transform:scaleX(0.9333);font-weight:bold;">OK</span>
<span class="t" style="left:79.30px;top:416px;font-size:8.4px;color:#1e1e1e;transform:scaleX(0.9780);">[mm]</span>
<span class="t" style="left:103.75px;top:416px;font-size:8.7px;color:#0c0c0c;transform:scaleX(0.9431);font-weight:bold;">Value Pattern: Characteristic 20 - Length</span>
<span class="t" style="left:77.00px;top:424px;font-size:8.4px;color:#1e1e1e;transform:scaleX(0.9061);">27,30</span>
<span class="t" style="left:77.00px;top:444px;font-size:8.4px;color:#1e1e1e;transform:scaleX(0.9061);">27,25</span>
<span class="t" style="left:77.00px;top:464px;font-size:8.4px;color:#1e1e1e;transform:scaleX(0.9061);">27,20</span>
<span class="t" style="left:77.00px;top:483px;font-size:8.4px;color:#1e1e1e;transform:scaleX(0.9061);">27,15</span>
<span class="t" style="left:77.00px;top:503px;font-size:8.4px;color:#1e1e1e;transform:scaleX(0.9061);">27,10</span>
<span class="t" style="left:77.00px;top:522px;font-size:8.4px;color:#1e1e1e;transform:scaleX(0.9061);">27,05</span>
<span class="t" style="left:77.00px;top:542px;font-size:8.4px;color:#1e1e1e;transform:scaleX(0.9061);">27,00</span>
<span class="t" style="left:77.00px;top:561px;font-size:8.4px;color:#1e1e1e;transform:scaleX(0.9061);">26,95</span>
<span class="t" style="left:77.00px;top:581px;font-size:8.4px;color:#1e1e1e;transform:scaleX(0.9061);">26,90</span>
<span class="t" style="left:77.00px;top:601px;font-size:8.4px;color:#1e1e1e;transform:scaleX(0.9061);">26,85</span>
<span class="t" style="left:77.00px;top:620px;font-size:8.4px;color:#1e1e1e;transform:scaleX(0.9061);">26,80</span>
<span class="t" style="left:77.00px;top:640px;font-size:8.4px;color:#1e1e1e;transform:scaleX(0.9061);">26,75</span>
<span class="t" style="left:77.00px;top:659px;font-size:8.4px;color:#1e1e1e;transform:scaleX(0.9061);">26,70</span>
<span class="t" style="left:74.60px;top:673px;font-size:8.4px;color:#1e1e1e;transform:scaleX(0.8484);">Smpl</span>
<span class="t" style="left:74.60px;top:681px;font-size:8.4px;color:#1e1e1e;transform:scaleX(0.8699);">Date</span>
<span class="t" style="left:74.60px;top:689px;font-size:8.4px;color:#1e1e1e;transform:scaleX(0.8846);">Time</span>
<span class="t" style="left:172.36px;top:673px;font-size:8.4px;color:#1e1e1e;">1</span>
<span class="t" style="left:155.50px;top:681px;font-size:8.4px;color:#1e1e1e;transform:scaleX(0.9160);">02.05.2023</span>
<span class="t" style="left:159.70px;top:689px;font-size:8.4px;color:#1e1e1e;transform:scaleX(0.9380);">11:20:21</span>
<span class="t" style="left:314.36px;top:673px;font-size:8.4px;color:#1e1e1e;">2</span>
<span class="t" style="left:297.50px;top:681px;font-size:8.4px;color:#1e1e1e;transform:scaleX(0.9160);">10.01.2024</span>
<span class="t" style="left:301.70px;top:689px;font-size:8.4px;color:#1e1e1e;transform:scaleX(0.9200);">10:14:59</span>
<span class="t" style="left:456.36px;top:673px;font-size:8.4px;color:#1e1e1e;">3</span>
<span class="t" style="left:439.50px;top:681px;font-size:8.4px;color:#1e1e1e;transform:scaleX(0.9160);">25.03.2024</span>
<span class="t" style="left:443.70px;top:689px;font-size:8.4px;color:#1e1e1e;transform:scaleX(0.9200);">13:37:06</span>
<span class="t" style="left:598.16px;top:673px;font-size:8.4px;color:#1e1e1e;">4</span>
<span class="t" style="left:581.30px;top:681px;font-size:8.4px;color:#1e1e1e;transform:scaleX(0.9160);">27.05.2024</span>
<span class="t" style="left:585.50px;top:689px;font-size:8.4px;color:#1e1e1e;transform:scaleX(0.9200);">16:26:40</span>
<span class="t" style="left:681.26px;top:664px;font-size:8.4px;color:#1e1e1e;">0</span>
<span class="t" style="left:712.18px;top:664px;font-size:8.4px;color:#1e1e1e;">1</span>
<span class="t" style="left:743.10px;top:664px;font-size:8.4px;color:#1e1e1e;">2</span>
<span class="t" style="left:774.01px;top:664px;font-size:8.4px;color:#1e1e1e;">3</span>
<span class="t" style="left:804.93px;top:664px;font-size:8.4px;color:#1e1e1e;">4</span>
<span class="t" style="left:835.85px;top:664px;font-size:8.4px;color:#1e1e1e;">5</span>
<span class="t" style="left:866.76px;top:664px;font-size:8.4px;color:#1e1e1e;">6</span>
</body></html>
